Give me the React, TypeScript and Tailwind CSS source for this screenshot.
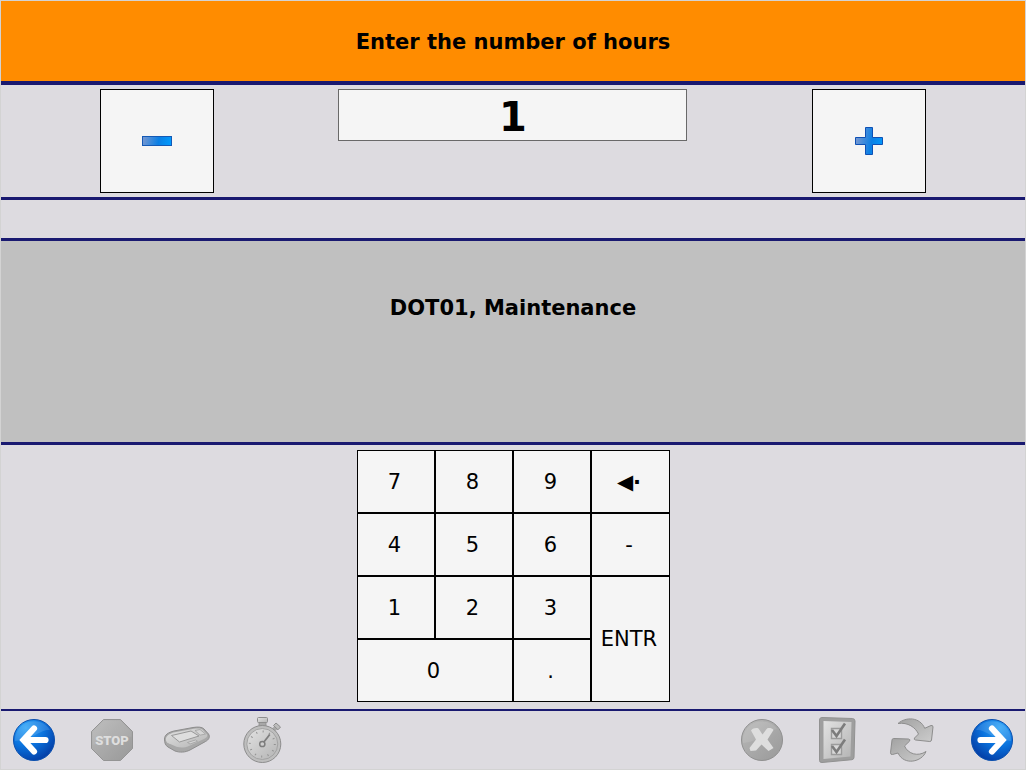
import React, { useState } from 'react';

const KEYS = [
  { label: '7' },
  { label: '8' },
  { label: '9' },
  { label: '◀·', name: 'Backspace', className: 'font-bold' },
  { label: '4' },
  { label: '5' },
  { label: '6' },
  { label: '-' },
  { label: '1' },
  { label: '2' },
  { label: '3' },
  { label: 'ENTR', className: 'row-span-2' },
  { label: '0', className: 'col-span-2' },
  { label: '.' },
];

function Gradients() {
  return (
    <svg className="absolute size-0" aria-hidden="true">
      <defs>
        <radialGradient id="blue" cx="0.3" cy="0.2" r="0.9">
          <stop offset="0" stopColor="#2fa4f7" />
          <stop offset="0.5" stopColor="#0a72dd" />
          <stop offset="1" stopColor="#0338a0" />
        </radialGradient>
        <linearGradient id="grey" x1="0" y1="0" x2="1" y2="1">
          <stop offset="0" stopColor="#b9b9b9" />
          <stop offset="1" stopColor="#999999" />
        </linearGradient>
        <linearGradient id="light" x1="0" y1="0" x2="1" y2="1">
          <stop offset="0" stopColor="#e2e2e2" />
          <stop offset="1" stopColor="#b4b4b4" />
        </linearGradient>
        <linearGradient id="arrowGrey" x1="0" y1="0" x2="1" y2="1">
          <stop offset="0" stopColor="#a2a2a2" />
          <stop offset="1" stopColor="#cccccc" />
        </linearGradient>
        <linearGradient id="sign" gradientUnits="userSpaceOnUse" x1="0" y1="12" x2="30" y2="18">
          <stop offset="0" stopColor="#7c98cf" />
          <stop offset="0.55" stopColor="#0b7fe4" />
          <stop offset="1" stopColor="#009dff" />
        </linearGradient>
      </defs>
    </svg>
  );
}

function ArrowIcon({ flip = false }: { flip?: boolean }) {
  return (
    <svg viewBox="0 0 48 48" className={flip ? 'size-12 -scale-x-100' : 'size-12'}>
      <circle cx="24" cy="24" r="20.5" fill="url(#blue)" stroke="#0a4fae" />
      <path d="M5 25a19 19 0 0 1 35-11C31 13 26 22 5 25z" fill="#fff" opacity="0.13" />
      <path d="M24 12.500 13.500 24 24 35.500M14 24h21.500" fill="none" stroke="#fff" strokeWidth="6.2" strokeLinecap="round" strokeLinejoin="miter" />
    </svg>
  );
}

function StopIcon() {
  return (
    <svg viewBox="0 0 48 48" className="size-12">
      <path d="M15.5 3.5h17l12 12v17l-12 12h-17l-12-12v-17z" fill="url(#grey)" stroke="#949494" />
      <path d="M16 4.5h16l11.5 11.5v5C30 18 18 25 4.5 29V16z" fill="#fff" opacity="0.07" />
      <text x="24" y="29" textAnchor="middle" fill="#dedede" className="font-[Roboto,sans-serif] text-[13px] font-black">
        STOP
      </text>
    </svg>
  );
}

function DeviceIcon() {
  return (
    <svg viewBox="0 0 48 48" className="size-12">
      <path d="M1.500 23C1.500 19 5 16.500 11 15L30 11.500c5-.8 9-.6 11 1.500l4.500 5c2 3 0 6-3 7.500L27 34c-5 2.500-10 2.700-15 1L5 31c-2.500-1.500-3.500-4-3.500-8z" fill="#a8a8a8" stroke="#8d8d8d" />
      <path d="M3 22c1-3 5-5 9-5.800L31 12.700c4-.5 7-.4 9 1.300l4 4.500c1 2-.5 3.200-3 4.500L26 30c-4.500 2-8.500 2-12.500.8l-8-3.500C3 26 2.500 24 3 22z" fill="url(#light)" />
      <path d="M8.500 19.500 28 15l8 5-19.500 6z" fill="#dedede" stroke="#999" />
      <path d="m32 14.500 5-1 5.500 4.500-5.500 1.200zM24.500 26.500l8-2.500 2 1.300-7.500 2.700z" fill="#d5d5d5" stroke="#a0a0a0" strokeWidth="0.8" />
    </svg>
  );
}

function StopwatchIcon() {
  return (
    <svg viewBox="0 0 48 48" className="size-12">
      <path d="M21 6h7v6h-7z" fill="#a7a7a7" stroke="#8e8e8e" strokeWidth="0.8" />
      <rect x="19.500" y="1.500" width="10" height="5" rx="1" fill="url(#light)" stroke="#8e8e8e" />
      <path d="m33.500 13 3-3 3 3-3 3z" fill="#aaa" />
      <path d="m35.500 9.500 2.500-2.500 4.500 4-2.500 2.800z" fill="#bcbcbc" stroke="#8e8e8e" />
      <circle cx="24.300" cy="28" r="18.500" fill="#bebebe" stroke="#8d8d8d" />
      <circle cx="24.300" cy="28" r="15.500" fill="url(#light)" stroke="#a3a3a3" />
      <circle cx="24.300" cy="28" r="12.500" fill="none" stroke="#929292" strokeWidth="2" strokeDasharray="1 5.545" />
      <path d="m24.300 28 7.500-9.500" stroke="#7d7d7d" strokeWidth="1.800" />
      <circle cx="24.300" cy="28" r="2.600" fill="#d0d0d0" stroke="#7d7d7d" strokeWidth="1.500" />
    </svg>
  );
}

function CancelIcon() {
  return (
    <svg viewBox="0 0 48 48" className="size-12">
      <circle cx="24" cy="24" r="20.500" fill="url(#grey)" stroke="#909090" />
      <path d="M5 27a19 19 0 0 1 34-14C31 14 24 25 5 27z" fill="#fff" opacity="0.1" />
      <path d="M13 14.500c2-2.500 5.500-3 7.500-2l4 6 4.500-6c2-1 5-.5 6.500 1.500L29.500 23.500l6 8.500-5 3-7-6.500L18 34.500l-5.500.5-1-3 6.500-8.500z" fill="#dedede" />
    </svg>
  );
}

function ChecklistIcon() {
  return (
    <svg viewBox="0 0 48 48" className="size-12">
      <path d="M9 1.500 39.500 2.500q2.500.2 2.500 2.500l-1 36.500q-.2 2-2 2.200L9 46.500q-2.500.2-2.500-2V4q0-2.500 2.500-2.500z" fill="#9e9e9e" stroke="#929292" />
      <path d="m10.500 5 28 1-1 34.500-27 2.500z" fill="url(#light)" />
      <path d="M18.500 12.500h10v10h-10zM18.500 28.500h10v10h-10z" fill="#d8d8d8" stroke="#9b9b9b" strokeWidth="1.400" />
      <path d="m19 14 4.500 6L32 7.500M19 30l4.500 6L32 23.500" fill="none" stroke="#7c7c7c" strokeWidth="2.600" />
    </svg>
  );
}

function RefreshIcon() {
  return (
    <svg viewBox="0 0 48 48" className="size-12">
      <path d="M10 7.500C18 .5 32 1 36.700 12.300l6.300-2.800q2-.5 2 1.500l-1.500 13q-.2 1.500-1.700 1.500L27.500 24q-2-.5-1-2l4-4C27.500 11.500 20 6 10 7.500z" fill="url(#arrowGrey)" stroke="#8d8d8d" strokeLinejoin="round" />
      <path d="M38 35.500C34 46 16 50 10 37l-5.500 1.500q-2 .3-2-1.700L4 24q.2-1.500 1.700-1.500L20.500 23q2 .3 1.200 2L16.500 30C20 38 30 41 38 35.500z" fill="url(#arrowGrey)" stroke="#8d8d8d" strokeLinejoin="round" />
    </svg>
  );
}

function FooterButton({ label, children }: { label: string; children: React.ReactNode }) {
  return (
    <button type="button" aria-label={label} className="size-12">
      {children}
    </button>
  );
}

export default function App() {
  const [hours, setHours] = useState('1');

  const step = (amount: number) => setHours(String((Number(hours) || 0) + amount));

  const press = (key: string) => {
    if (key === 'ENTR') return;
    setHours(key === '◀·' ? hours.slice(0, -1) : hours + key);
  };

  return (
    <div className="flex min-h-screen flex-col border border-[#d3d3d3] bg-[#dddbe0] font-['DejaVu_Sans',Verdana,sans-serif] text-black">
      <Gradients />

      {/* Title */}
      <header className="flex h-21 items-center justify-center border-b-4 border-[#191970] bg-[#ff8c00] pt-1">
        <h1 className="text-[21px] font-bold">
          <label htmlFor="hours">Enter the number of hours</label>
        </h1>
      </header>

      {/* Value with minus / plus */}
      <section className="grid grid-cols-[7fr_9fr_7fr] items-start justify-items-center border-b-3 border-[#191970] py-1">
        <button type="button" aria-label="Decrease" onClick={() => step(-1)} className="flex h-26 w-28.5 items-center justify-center border border-black bg-[#f5f5f5]">
          <svg viewBox="0 0 30 30" className="size-7.5">
            <rect x="0.5" y="10.500" width="29" height="9" fill="url(#sign)" stroke="#1459b5" />
          </svg>
        </button>
        <input
          id="hours"
          value={hours}
          onChange={(e) => setHours(e.target.value)}
          className="h-13 w-full max-w-[349px] border border-[#696969] bg-[#f5f5f5] pt-1 text-center text-[40px] font-bold"
        />
        <button type="button" aria-label="Increase" onClick={() => step(1)} className="flex h-26 w-28.5 items-center justify-center border border-black bg-[#f5f5f5]">
          <svg viewBox="0 0 28 28" className="size-7">
            <path d="M10.500.5h7v10h10v7h-10v10h-7v-10H.5v-7h10z" fill="url(#sign)" stroke="#0d50b5" />
          </svg>
        </button>
      </section>

      <div className="h-10.25 border-b-3 border-[#191970]" />

      {/* Selected indirect activity */}
      <section className="flex min-h-51 grow justify-center border-b-3 border-[#191970] bg-[#c0c0c0] pt-13">
        <p className="text-[21px] font-bold">DOT01, Maintenance</p>
      </section>

      {/* Keypad */}
      <section className="flex justify-center border-b-2 border-[#191970] pt-[5px] pb-[7px]">
        <div className="grid auto-rows-[63px] grid-cols-[78px_78px_78px_79px]">
          {KEYS.map((key) => (
            <button
              key={key.label}
              type="button"
              aria-label={key.name}
              onClick={() => press(key.label)}
              className={`border border-black bg-[#f5f5f5] pt-0.5 pr-0.5 text-[21px] ${key.className ?? ''}`}
            >
              {key.label}
            </button>
          ))}
        </div>
      </section>

      {/* Toolbar */}
      <footer className="flex items-center justify-between px-[9px] py-[5px]">
        <div className="flex gap-[30px]">
          <FooterButton label="Back"><ArrowIcon /></FooterButton>
          <div className="flex gap-[27px]">
            <FooterButton label="Stop"><StopIcon /></FooterButton>
            <FooterButton label="Device"><DeviceIcon /></FooterButton>
            <FooterButton label="Timer"><StopwatchIcon /></FooterButton>
          </div>
        </div>
        <div className="flex gap-8">
          <div className="flex gap-[27px]">
            <FooterButton label="Cancel"><CancelIcon /></FooterButton>
            <FooterButton label="Checklist"><ChecklistIcon /></FooterButton>
            <FooterButton label="Refresh"><RefreshIcon /></FooterButton>
          </div>
          <FooterButton label="Next"><ArrowIcon flip /></FooterButton>
        </div>
      </footer>
    </div>
  );
}
